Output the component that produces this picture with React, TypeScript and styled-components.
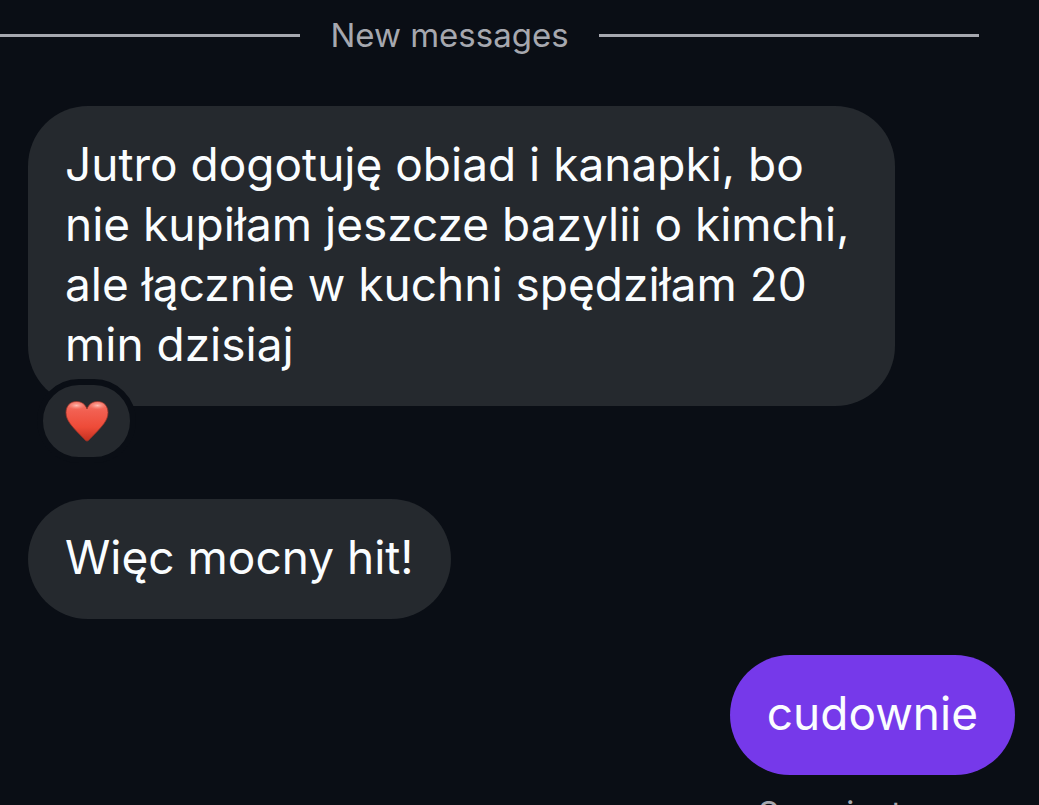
import React from "react";
import styled, { createGlobalStyle } from "styled-components";

const colors = {
  page: "#0a0e15",
  incoming: "#25292e",
  outgoing: "#7639ea",
  text: "#fafdff",
  muted: "#a6a8af",
};

const GlobalStyle = createGlobalStyle`
  * { box-sizing: border-box; }
  body {
    margin: 0;
    background: ${colors.page};
    color: ${colors.text};
    font-family: Inter, "Noto Sans", sans-serif;
  }
`;

const Chat = styled.main`
  display: flex;
  flex-direction: column;
  height: 100vh;
  overflow: hidden;
  padding-top: 15px;
`;

const Divider = styled.div`
  display: flex;
  flex-shrink: 0;
  align-items: center;
  gap: 30px;
  margin: 0 60px 51px -80px;
  color: ${colors.muted};
  font-size: 33px;
  line-height: 40px;
  white-space: nowrap;
`;

const Rule = styled.span`
  flex: 1;
  height: 3px;
  background: ${colors.muted};
`;

const Thread = styled.section`
  display: flex;
  flex-direction: column;
  padding: 0 24px 0 28px;
`;

const Message = styled.article<{ $own?: boolean; $gap: number }>`
  display: flex;
  flex-direction: column;
  align-items: ${(p) => (p.$own ? "flex-end" : "flex-start")};
  margin-bottom: ${(p) => p.$gap}px;
`;

const Bubble = styled.p<{ $own?: boolean }>`
  margin: 0;
  max-width: calc(100% - 120px);
  padding: 28px 37px 32px;
  border-radius: 60px;
  background: ${(p) => (p.$own ? colors.outgoing : colors.incoming)};
  font-size: 46px;
  line-height: 60px;
`;

const Reaction = styled.button`
  position: relative;
  display: flex;
  align-items: center;
  justify-content: center;
  width: 99px;
  height: 84px;
  margin: -27px 0 0 9px;
  padding: 0;
  border: 6px solid ${colors.page};
  border-radius: 42px;
  background: ${colors.incoming};
`;

const Receipt = styled.p`
  margin: 0;
  padding-right: 38px;
  color: ${colors.muted};
  font-size: 33px;
  line-height: 40px;
`;

function Heart() {
  return (
    <svg width="44" height="42" viewBox="0 0 44 42" aria-hidden="true">
      <defs>
        <linearGradient id="heartFill" x1="0" y1="0" x2="0" y2="1">
          <stop offset="0" stopColor="#f4776a" />
          <stop offset="0.25" stopColor="#f25f50" />
          <stop offset="0.65" stopColor="#ee4b38" />
          <stop offset="1" stopColor="#c4301f" />
        </linearGradient>
        <radialGradient id="heartShine" cx="0.5" cy="0.5" r="0.5">
          <stop offset="0" stopColor="#ffc9bf" stopOpacity="0.9" />
          <stop offset="1" stopColor="#ff8f80" stopOpacity="0" />
        </radialGradient>
      </defs>
      <path
        d="M22 41C20.800 41 19.800 39.800 18.500 38.300C14.500 34 8.500 28.500 5 23.500C2.300 19.600 1 16.500 1 12.500C1 6 5.300 1.500 11.500 1.500C16.500 1.500 20.500 4.500 22 9C23.500 4.500 27.500 1.500 32.500 1.500C38.700 1.500 43 6 43 12.500C43 16.500 41.700 19.600 39 23.500C35.500 28.500 29.500 34 25.500 38.300C24.200 39.800 23.200 41 22 41Z"
        fill="url(#heartFill)"
        stroke="#9c3328"
        strokeWidth="0.8"
      />
      <ellipse cx="11.500" cy="5.500" rx="9" ry="4" fill="url(#heartShine)" />
      <ellipse cx="32.500" cy="5.500" rx="9" ry="4" fill="url(#heartShine)" />
    </svg>
  );
}

export default function App() {
  return (
    <>
      <GlobalStyle />
      <Chat>
        <Divider>
          <Rule />
          New messages
          <Rule />
        </Divider>
        <Thread>
          <Message $gap={36}>
            <Bubble>
              Jutro dogotuję obiad i kanapki, bo nie kupiłam jeszcze bazylii o
              kimchi, ale łącznie w kuchni spędziłam 20 min dzisiaj
            </Bubble>
            <Reaction aria-label="Heart reaction">
              <Heart />
            </Reaction>
          </Message>
          <Message $gap={36}>
            <Bubble>Więc mocny hit!</Bubble>
          </Message>
          <Message $own $gap={18}>
            <Bubble $own>cudownie</Bubble>
          </Message>
          <Message $own $gap={0}>
            <Receipt>Seen just now</Receipt>
          </Message>
        </Thread>
      </Chat>
    </>
  );
}
